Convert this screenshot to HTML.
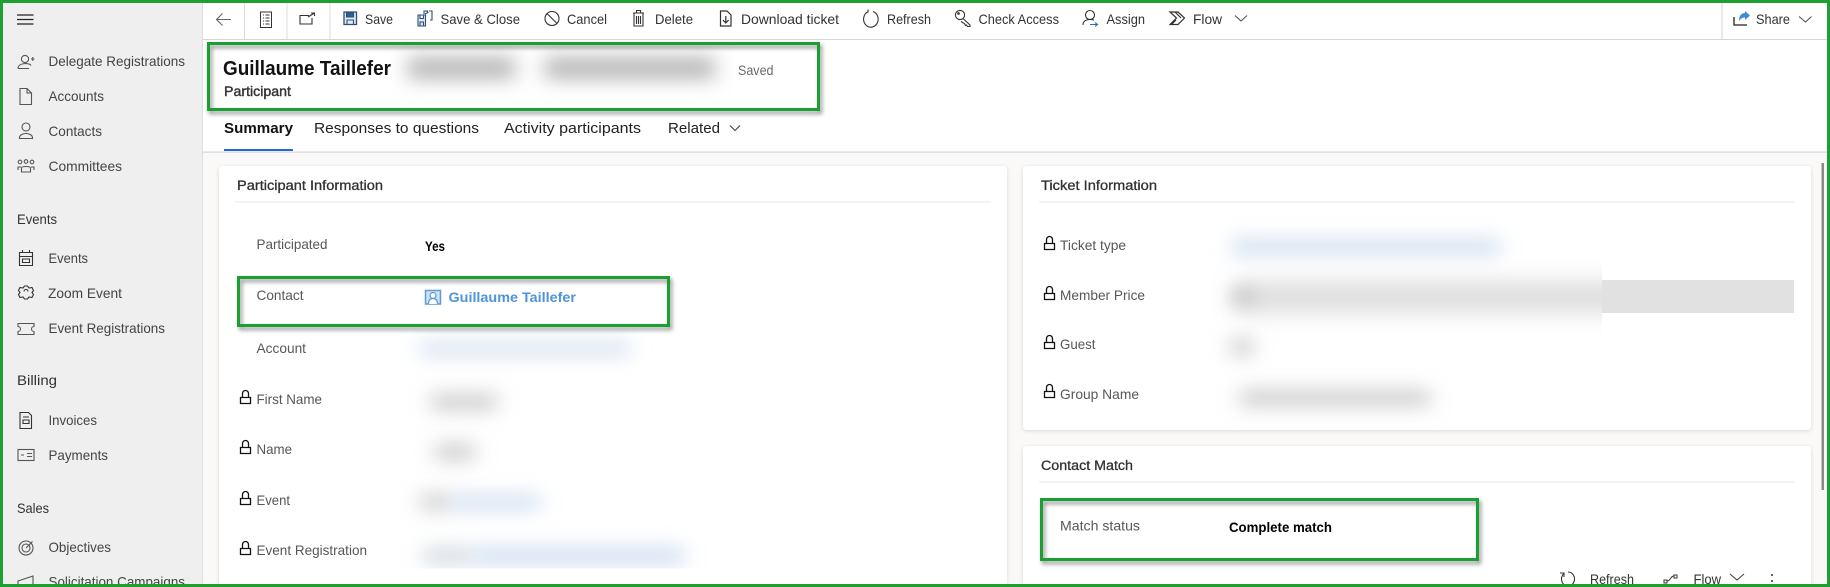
<!DOCTYPE html>
<html lang="en"><head><meta charset="utf-8"><title>Participant</title>
<style>
html,body{margin:0;padding:0;background:#fff;width:1830px;height:587px;overflow:hidden}
svg{display:block}
text{font-family:"Liberation Sans",Arial,sans-serif;font-size:14px;fill:#3b3a39}
.nav{fill:#444}
.h{fill:#323130;font-weight:normal}
.cmd{fill:#333}
.lab{fill:#595755}
.sec{fill:#323130;font-size:13.5px}
.val{fill:#000;font-weight:bold;font-size:13.5px}
.i{fill:none;stroke:#333;stroke-width:1.1}
.l{fill:none;stroke:#111;stroke-width:1.3}
.g{fill:none;stroke:#1f9f31;stroke-width:3}
</style></head><body>
<svg width="1830" height="587" viewBox="0 0 1830 587" xmlns="http://www.w3.org/2000/svg">
<defs>
<filter id="b5" x="-100%" y="-400%" width="300%" height="900%"><feGaussianBlur stdDeviation="10"/></filter>
<filter id="b8" x="-100%" y="-400%" width="300%" height="900%"><feGaussianBlur stdDeviation="10"/></filter>
<filter id="b12" x="-50%" y="-300%" width="200%" height="700%"><feGaussianBlur stdDeviation="12"/></filter>
<filter id="sh" x="-5%" y="-20%" width="110%" height="140%"><feDropShadow dx="2" dy="3" stdDeviation="2" flood-color="#000" flood-opacity=".45"/></filter>
<filter id="cs" x="-3%" y="-5%" width="106%" height="110%"><feDropShadow dx="0" dy="1" stdDeviation="2" flood-color="#000" flood-opacity=".13"/></filter>
<clipPath id="c1"><rect x="391" y="42" width="342" height="69"/></clipPath>
<clipPath id="c2"><rect x="400" y="330" width="400" height="238.5"/></clipPath>
<clipPath id="c3"><rect x="1186" y="257" width="416" height="85"/></clipPath>
</defs>

<rect width="1830" height="587" fill="#faf9f8"/>
<!-- sidebar -->
<rect x="0" y="0" width="202" height="587" fill="#efefef"/>
<rect x="202" y="0" width="1" height="587" fill="#dedede"/>
<path d="M17 15h16.500M17 19.500h16.500M17 24h16.500" stroke="#222" stroke-width="1.200" fill="none"/>

<g class="i" style="stroke:#555">
<circle cx="25" cy="59" r="3.600"/><path d="M18 68.500c0-6 12-6 13-3M18 68.500h11"/><path d="M31 59h3.500M32.800 57v4"/>
<path d="M20 88.500h7l4.500 4.500v11.500H20z"/><path d="M27 88.500V93h4.500"/>
<circle cx="26" cy="127" r="4"/><path d="M19.500 138c0-6 13-6 13 0v.500h-13z"/>
<circle cx="20" cy="162" r="1.800"/><circle cx="26" cy="161.500" r="1.800"/><circle cx="32" cy="162" r="1.800"/><path d="M18 170v-3h3M31 167h3v3M21.500 172v-4c0-2 9-2 9 0v4z"/>
<path d="M19.500 252.500h13v13h-13zM19.500 256.500h13M22.500 252v-2M29.500 252v-2M22.500 259h7v3.500h-7z" style="stroke:#333"/>
<path d="M23 288l1.500-2h3l1.500 2 3-.5 1.500 3-1.500 2 1.500 2-1.500 3-3-.5-1.500 2h-3L23 297l-3 .5-1.500-3 1.500-2-1.500-2 1.500-3zM24 291.500a2 2 0 0 1 4 0" style="stroke:#333"/>
<path d="M18 323.500h16v3a2.500 2.500 0 0 0 0 5v3H18v-3a2.500 2.500 0 0 0 0-5z"/>
<path d="M20 412.500h8.500l3 3v13h-11.500zM23 417h6M23 420h6v3.500h-6z" style="stroke:#333"/>
<rect x="18" y="449.500" width="16" height="11"/><path d="M21 455h3M27 453.500h5M27 456.500h5"/>
<circle cx="26" cy="548" r="7"/><circle cx="26" cy="548" r="4"/><path d="M26 548l6.500-6.500"/>
<path d="M18 581l15-5v10H18z"/>
</g>

<text class="nav" x="48.500" y="66" textLength="136.500" lengthAdjust="spacingAndGlyphs">Delegate Registrations</text>
<text class="nav" x="48.500" y="101" textLength="55.500" lengthAdjust="spacingAndGlyphs">Accounts</text>
<text class="nav" x="48.500" y="136" textLength="53.500" lengthAdjust="spacingAndGlyphs">Contacts</text>
<text class="nav" x="48.500" y="171" textLength="73.500" lengthAdjust="spacingAndGlyphs">Committees</text>
<text class="h" x="17" y="224" textLength="40" lengthAdjust="spacingAndGlyphs">Events</text>
<text class="nav" x="48.500" y="263" textLength="39.500" lengthAdjust="spacingAndGlyphs">Events</text>
<text class="nav" x="48" y="298" textLength="74" lengthAdjust="spacingAndGlyphs">Zoom Event</text>
<text class="nav" x="48.500" y="333" textLength="116.500" lengthAdjust="spacingAndGlyphs">Event Registrations</text>
<text class="h" x="17" y="385" textLength="40" lengthAdjust="spacingAndGlyphs">Billing</text>
<text class="nav" x="48.500" y="425" textLength="48.500" lengthAdjust="spacingAndGlyphs">Invoices</text>
<text class="nav" x="48.500" y="460" textLength="59.500" lengthAdjust="spacingAndGlyphs">Payments</text>
<text class="h" x="17" y="513" textLength="32" lengthAdjust="spacingAndGlyphs">Sales</text>
<text class="nav" x="48.500" y="552" textLength="62.500" lengthAdjust="spacingAndGlyphs">Objectives</text>
<text class="nav" x="48.500" y="586.500" textLength="136.500" lengthAdjust="spacingAndGlyphs">Solicitation Campaigns</text>

<!-- header white -->
<rect x="203" y="0" width="1627" height="152" fill="#fff"/>
<rect x="203" y="39" width="1627" height="1" fill="#d6d6d6"/>
<rect x="203" y="151.500" width="1627" height="1.200" fill="#d6d6d6"/>
<rect x="244" y="3" width="1" height="36" fill="#dcdcdc"/>
<rect x="286.500" y="3" width="1" height="36" fill="#dcdcdc"/>
<rect x="329.500" y="3" width="1" height="36" fill="#dcdcdc"/>
<rect x="1721.500" y="3" width="1" height="36" fill="#d0d0d0"/>

<!-- command icons -->
<path d="M231 19.500h-14M222.500 13.500l-6 6 6 6" fill="none" stroke="#666" stroke-width="1.100"/>
<g class="i">
<path d="M260.500 12h11v15.500h-11zM263 15h1M265.500 15h4M263 18h1M265.500 18h4M263 21h1M265.500 21h4M263 24h1M265.500 24h4" stroke-width="1"/>
<path d="M309 15.500h-9v8.500h12v-6M308 17l6.500-4M311 13h3.500v3"/>
<path d="M344 12h12.500v12.500H344z" style="stroke:#2f4f76;fill:#dfe9f5;stroke-width:1.300"/><path d="M346.500 12.500h7v4.500h-7z" style="fill:#2f5d92;stroke:#2f4f76"/><path d="M347 24v-4h6.500v4" style="stroke:#2f4f76"/>
<path d="M418 15h7.500v11H418zM420 15v3.500h3.500V15M420 26v-4h3.500v4" style="stroke:#2f4f76;fill:#dfe9f5"/><path d="M428 11h-4v3M429 11h3v9h-2M425 14l3-1.500-1.500-2" style="stroke:#2f4f76"/>
<circle cx="552" cy="18.500" r="7"/><path d="M547 13.500l10 10"/>
<path d="M633 13h11M636.500 13v-2.500h4V13M634 13.500v12.500h9V13.500M636.500 16v8M638.500 16v8M640.500 16v8"/>
<path d="M720.500 11h6.500l4 4v11h-10.500zM725.800 16v6.500M723 20l2.800 3 2.800-3" stroke-width="1.200"/>
<path d="M873 11.500a7.300 8 0 1 1-5 .3M868 12.500V9.500"/>
<circle cx="960" cy="15" r="4.600"/><circle cx="958.500" cy="13.500" r=".8"/><path d="M963 18.500l7 6.500v1.500h-2.500l-1-1.500-1 .5-1-2-2-1-1.500-1"/>
<circle cx="1090" cy="15" r="4.500"/><path d="M1083 25c0-6 7-6 11-5"/><path d="M1090 24.500h7.500M1095 22.500l2.500 2-2.500 2" style="stroke:#2b6cb0"/>
<path d="M1170 12h8l6.500 6-6.500 6.500h-8l6.500-6.500zM1175 12l6 6M1172 24l4-4" stroke-width="1.200"/>
</g>
<path d="M1235 15.500l6 5.500 6-5.500" fill="none" stroke="#555" stroke-width="1.100"/>
<path d="M1734 17v8h13" fill="none" stroke="#222" stroke-width="1.300"/>
<path d="M1739 21c0-6 3-8 6-8v-2l5 4.500-5 4.500v-2.500c-3 0-4 1-6 3.500z" fill="#3f8dd0"/>
<path d="M1799 16.500l6.500 5.500 6-5.500" fill="none" stroke="#555" stroke-width="1.100"/>

<text class="cmd" x="365" y="24" textLength="28" lengthAdjust="spacingAndGlyphs">Save</text>
<text class="cmd" x="440.500" y="24" textLength="79.500" lengthAdjust="spacingAndGlyphs">Save &amp; Close</text>
<text class="cmd" x="567" y="24" textLength="40" lengthAdjust="spacingAndGlyphs">Cancel</text>
<text class="cmd" x="655" y="24" textLength="38" lengthAdjust="spacingAndGlyphs">Delete</text>
<text class="cmd" x="741" y="24" textLength="98" lengthAdjust="spacingAndGlyphs">Download ticket</text>
<text class="cmd" x="887" y="24" textLength="44" lengthAdjust="spacingAndGlyphs">Refresh</text>
<text class="cmd" x="978.500" y="24" textLength="80.500" lengthAdjust="spacingAndGlyphs">Check Access</text>
<text class="cmd" x="1106.500" y="24" textLength="38.500" lengthAdjust="spacingAndGlyphs">Assign</text>
<text class="cmd" x="1193" y="24" textLength="29" lengthAdjust="spacingAndGlyphs">Flow</text>
<text class="cmd" x="1756" y="24" textLength="34" lengthAdjust="spacingAndGlyphs">Share</text>

<!-- title -->
<g clip-path="url(#c1)">
<rect x="408" y="58" width="107" height="20" fill="#aeaeae" filter="url(#b5)"/>
<rect x="545" y="58" width="170" height="20" fill="#aeaeae" filter="url(#b5)"/>
</g>
<text x="223" y="75" textLength="168" lengthAdjust="spacingAndGlyphs" style="font-size:20px;font-weight:bold;fill:#111">Guillaume Taillefer</text>
<text x="224" y="96" textLength="67" lengthAdjust="spacingAndGlyphs" style="font-weight:normal;fill:#333;stroke:#333;stroke-width:.4">Participant</text>
<text x="738" y="75" textLength="35.500" lengthAdjust="spacingAndGlyphs" style="fill:#6b6967">Saved</text>

<!-- tabs -->
<text x="224" y="133" textLength="69" lengthAdjust="spacingAndGlyphs" style="font-size:15px;font-weight:bold;fill:#111">Summary</text>
<rect x="224" y="149" width="69" height="2" fill="#2266e3"/>
<text x="314" y="133" textLength="165" lengthAdjust="spacingAndGlyphs" style="font-size:15px;fill:#222">Responses to questions</text>
<text x="504" y="133" textLength="137" lengthAdjust="spacingAndGlyphs" style="font-size:15px;fill:#222">Activity participants</text>
<text x="668" y="133" textLength="52" lengthAdjust="spacingAndGlyphs" style="font-size:15px;fill:#222">Related</text>
<path d="M730 125.500l5 5 5-5" fill="none" stroke="#444" stroke-width="1.100"/>

<!-- cards -->
<rect x="219" y="166" width="788" height="440" rx="4" fill="#fff" filter="url(#cs)"/>
<rect x="1023" y="166" width="788" height="264" rx="4" fill="#fff" filter="url(#cs)"/>
<rect x="1023" y="446" width="788" height="160" rx="4" fill="#fff" filter="url(#cs)"/>
<rect x="235" y="201.500" width="756" height="1" fill="#e9e8e7"/>
<rect x="1039" y="201.500" width="756" height="1" fill="#e9e8e7"/>
<rect x="1039" y="481.500" width="756" height="1" fill="#e9e8e7"/>

<text class="sec" x="237" y="190" textLength="146" lengthAdjust="spacingAndGlyphs" style="stroke:#323130;stroke-width:.3">Participant Information</text>
<text class="sec" x="1041" y="190" textLength="116" lengthAdjust="spacingAndGlyphs" style="stroke:#323130;stroke-width:.3">Ticket Information</text>
<text class="sec" x="1041" y="470" textLength="92" lengthAdjust="spacingAndGlyphs" style="stroke:#323130;stroke-width:.3">Contact Match</text>

<!-- blurred left -->
<g clip-path="url(#c2)">
<rect x="420" y="343" width="210" height="12" fill="#cddcef" filter="url(#b8)"/>
<rect x="431" y="396" width="66" height="12" fill="#bababa" filter="url(#b5)"/>
<rect x="435" y="446" width="40" height="12" fill="#bababa" filter="url(#b5)"/>
<rect x="420" y="496" width="32" height="12" fill="#c0c0c0" filter="url(#b5)"/>
<rect x="452" y="496" width="88" height="12" fill="#c5d7ed" filter="url(#b5)"/>
<rect x="423" y="549" width="50" height="14" fill="#ccd3dc" filter="url(#b5)"/>
<rect x="473" y="549" width="211" height="14" fill="#c5d7ed" filter="url(#b5)"/>
</g>
<!-- blurred right -->
<rect x="1232" y="240" width="268" height="14" fill="#c8daee" filter="url(#b8)"/>
<g clip-path="url(#c3)">
<rect x="1240" y="282" width="420" height="30" fill="#dcdcdc" filter="url(#b12)"/>
<rect x="1232" y="290" width="20" height="14" fill="#b0b0b0" filter="url(#b5)"/>
</g>
<rect x="1602" y="280" width="192" height="33" fill="#e1e1e1"/>
<rect x="1231" y="340" width="22" height="14" fill="#c0c0c0" filter="url(#b5)"/>
<rect x="1240" y="392" width="190" height="12" fill="#bababa" filter="url(#b5)"/>

<!-- fields -->
<text class="lab" x="256.500" y="249" textLength="71" lengthAdjust="spacingAndGlyphs">Participated</text>
<text class="val" x="425" y="251" textLength="20" lengthAdjust="spacingAndGlyphs">Yes</text>
<text class="lab" x="256.500" y="300" textLength="47" lengthAdjust="spacingAndGlyphs">Contact</text>
<path d="M425.500 290.500h15v13.500h-15z" fill="#cfe2f5" stroke="#5c9ad8" stroke-width="1.500"/>
<circle cx="433" cy="295.500" r="3" fill="#fff" stroke="#5c9ad8" stroke-width="1.200"/>
<path d="M428.500 304c0-4 1.500-5.500 4.500-5.500s4.500 1.500 4.500 5.500" fill="#fff" stroke="#5c9ad8" stroke-width="1.200"/>
<text x="448.500" y="302" textLength="127.500" lengthAdjust="spacingAndGlyphs" style="font-weight:bold;font-size:14px;fill:#4f94d8">Guillaume Taillefer</text>
<text class="lab" x="256.500" y="353" textLength="49.500" lengthAdjust="spacingAndGlyphs">Account</text>
<text class="lab" x="256.500" y="404" textLength="65.500" lengthAdjust="spacingAndGlyphs">First Name</text>
<text class="lab" x="256.500" y="454" textLength="35.500" lengthAdjust="spacingAndGlyphs">Name</text>
<text class="lab" x="256.500" y="505" textLength="33.500" lengthAdjust="spacingAndGlyphs">Event</text>
<text class="lab" x="256.500" y="555" textLength="110.500" lengthAdjust="spacingAndGlyphs">Event Registration</text>
<text class="lab" x="1060" y="250" textLength="66" lengthAdjust="spacingAndGlyphs">Ticket type</text>
<text class="lab" x="1060" y="300" textLength="85" lengthAdjust="spacingAndGlyphs">Member Price</text>
<text class="lab" x="1060" y="349" textLength="35.500" lengthAdjust="spacingAndGlyphs">Guest</text>
<text class="lab" x="1060" y="399" textLength="79" lengthAdjust="spacingAndGlyphs">Group Name</text>
<text class="lab" x="1060" y="530.500" textLength="80" lengthAdjust="spacingAndGlyphs">Match status</text>
<text class="val" x="1229" y="532" textLength="103" lengthAdjust="spacingAndGlyphs">Complete match</text>

<!-- locks -->
<g class="l">
<path d="M240.500 397.500h10v6h-10zM242.500 397.500v-4a3 3 0 0 1 6 0v4"/>
<path d="M240.500 447.500h10v6h-10zM242.500 447.500v-4a3 3 0 0 1 6 0v4"/>
<path d="M240.500 498.500h10v6h-10zM242.500 498.500v-4a3 3 0 0 1 6 0v4"/>
<path d="M240.500 548.500h10v6h-10zM242.500 548.500v-4a3 3 0 0 1 6 0v4"/>
<path d="M1044.500 243.500h10v6h-10zM1046.500 243.500v-4a3 3 0 0 1 6 0v4"/>
<path d="M1044.500 293.500h10v6h-10zM1046.500 293.500v-4a3 3 0 0 1 6 0v4"/>
<path d="M1044.500 342.500h10v6h-10zM1046.500 342.500v-4a3 3 0 0 1 6 0v4"/>
<path d="M1044.500 391.500h10v6h-10zM1046.500 391.500v-4a3 3 0 0 1 6 0v4"/>
</g>

<!-- bottom card command bar -->
<path d="M1568 572a6.500 7 0 1 1-4 1.500M1564 577v-4h-4" fill="none" stroke="#333" stroke-width="1.100"/>
<text class="cmd" x="1590" y="584" textLength="44" lengthAdjust="spacingAndGlyphs">Refresh</text>
<path d="M1664 580h3v3h-3zM1674 575h3v3h-3zM1667 581c4 0 3-5 7-5" fill="none" stroke="#333" stroke-width="1"/>
<text class="cmd" x="1693.500" y="584" textLength="27.500" lengthAdjust="spacingAndGlyphs">Flow</text>
<path d="M1730 574l7 6 7-6" fill="none" stroke="#444" stroke-width="1.100"/>
<circle cx="1772" cy="575" r="1" fill="#333"/><circle cx="1772" cy="581" r="1" fill="#333"/>

<!-- scrollbar -->
<rect x="1821.500" y="163" width="2.500" height="327" fill="#8a8a8a"/>

<!-- green callouts -->
<rect x="208.500" y="43.500" width="610" height="66" class="g" filter="url(#sh)"/>
<rect x="238.500" y="277.500" width="430" height="48" class="g" filter="url(#sh)"/>
<rect x="1041.500" y="499.500" width="436" height="60" class="g" filter="url(#sh)"/>
<!-- outer border -->
<rect x="1.500" y="1.500" width="1827" height="584" fill="none" stroke="#1f9f31" stroke-width="3"/>
</svg>
</body></html>
